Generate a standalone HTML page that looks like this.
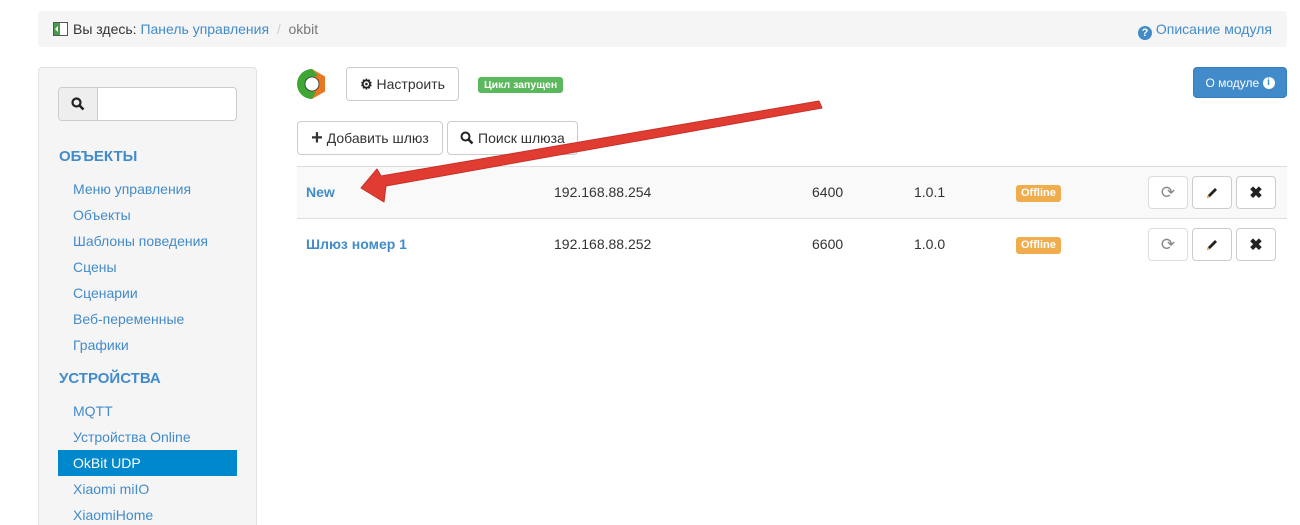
<!DOCTYPE html>
<html style="overflow:hidden;height:525px"><head><meta charset="utf-8"><style>
*{box-sizing:border-box;margin:0;padding:0}
body{width:1300px;height:525px;background:#fff;font-family:"Liberation Sans",sans-serif;font-size:14px;color:#333;position:relative;overflow:hidden}
.a{position:absolute}
.lnk{color:#428bca}
.btn{position:absolute;border:1px solid #ccc;border-radius:4px;background:#fff;display:flex;align-items:center;justify-content:center;font-size:14px;color:#333}
.side a{position:absolute;left:73px;color:#428bca;font-size:14px;text-decoration:none}
.hd{position:absolute;left:59px;color:#428bca;font-weight:bold;font-size:15px}
.lab{position:absolute;background:#f0ad4e;color:#fff;font-weight:bold;font-size:11px;border-radius:3px;padding:2px 5px;line-height:13px}
</style></head><body>
<div class="a" style="left:38px;top:11px;width:1249px;height:36px;background:#f5f5f5;border-radius:4px"></div>
<svg class="a" style="left:53px;top:22px" width="15" height="14"><rect x="0.5" y="0.5" width="14" height="13" fill="#fff" stroke="#555"/><rect x="1" y="1" width="6" height="12" fill="#4a9a4a"/><path d="M2 7l3-3v6z" fill="#fff"/></svg>
<div class="a" style="left:73px;top:21px;font-size:14px">Вы здесь: <span class="lnk">Панель управления</span> <span style="color:#ccc">&nbsp;/&nbsp;</span> <span style="color:#777">okbit</span></div>
<div class="a lnk" style="left:1138px;top:21px;font-size:14px"><span style="display:inline-block;width:14px;height:14px;border-radius:7px;background:#428bca;color:#fff;font-size:11px;font-weight:bold;text-align:center;line-height:14px;vertical-align:-2px">?</span> Описание модуля</div>

<div class="a side" style="left:38px;top:67px;width:219px;height:458px;background:#f5f5f5;border:1px solid #e3e3e3;border-bottom:none;border-radius:4px 4px 0 0"></div>
<div class="a" style="left:58px;top:87px;width:179px;height:34px;border:1px solid #ccc;border-radius:4px;background:#fff;overflow:hidden">
<div style="width:39px;height:32px;background:#eee;border-right:1px solid #ccc;display:flex;align-items:center;justify-content:center"><svg width="14" height="14"><circle cx="5.5" cy="5.5" r="4" fill="none" stroke="#222" stroke-width="2.2"/><path d="M8.5 8.5l4 4" stroke="#222" stroke-width="2.6"/></svg></div></div>
<div class="hd" style="top:148px">ОБЪЕКТЫ</div>
<div class="side">
<a style="top:181px">Меню управления</a>
<a style="top:207px">Объекты</a>
<a style="top:233px">Шаблоны поведения</a>
<a style="top:259px">Сцены</a>
<a style="top:285px">Сценарии</a>
<a style="top:311px">Веб-переменные</a>
<a style="top:337px">Графики</a>
</div>
<div class="hd" style="top:370px">УСТРОЙСТВА</div>
<div class="a" style="left:58px;top:450px;width:179px;height:26px;background:#0088cc"></div>
<div class="side">
<a style="top:403px">MQTT</a>
<a style="top:429px">Устройства Online</a>
<a style="top:455px;color:#fff">OkBit UDP</a>
<a style="top:481px">Xiaomi miIO</a>
<a style="top:507px">XiaomiHome</a>
</div>

<svg class="a" style="left:296px;top:68px" width="32" height="32" viewBox="0 0 32 32"><polygon points="16,1 29,8.5 29,23.5 16,31 3,23.5 3,8.5" fill="#e87722"/><path d="M16 1 A15 15 0 0 0 16 31 L20 24 L16 23 A7 7 0 0 1 16 9 L22 8Z" fill="#3fa535"/><circle cx="16" cy="16" r="7" fill="#fff"/><circle cx="16" cy="16" r="7" fill="none" stroke="#333" stroke-width="0.8"/></svg>
<div class="btn" style="left:346px;top:67px;width:113px;height:34px"><b style="color:#222">⚙</b>&nbsp;Настроить</div>
<div class="a" style="left:478px;top:77px;background:#5cb85c;color:#fff;font-weight:bold;font-size:10.5px;border-radius:3px;padding:2px 6px;line-height:12px">Цикл запущен</div>
<div class="a" style="left:1193px;top:67px;width:94px;height:31px;background:#428bca;border:1px solid #357ebd;border-radius:4px;color:#fff;font-size:12px;display:flex;align-items:center;justify-content:center">О модуле&nbsp;<span style="display:inline-block;width:12px;height:12px;border-radius:6px;background:#fff;color:#428bca;font-size:10px;font-weight:bold;text-align:center;line-height:12px">i</span></div>
<div class="btn" style="left:297px;top:121px;width:146px;height:34px"><b style="font-size:20px;line-height:14px">+</b>&nbsp;Добавить шлюз</div>
<div class="btn" style="left:447px;top:121px;width:131px;height:34px"><svg width="14" height="14"><circle cx="5.5" cy="5.5" r="4" fill="none" stroke="#222" stroke-width="2"/><path d="M8.5 8.5l4 4" stroke="#222" stroke-width="2.4"/></svg>&nbsp;Поиск шлюза</div>

<div class="a" style="left:297px;top:166px;width:990px;height:52px;background:#f9f9f9;border-top:1px solid #ddd"></div>
<div class="a" style="left:297px;top:218px;width:990px;height:52px;border-top:1px solid #ddd"></div>
<div class="a lnk" style="left:306px;top:184px;font-weight:bold">New</div>
<div class="a" style="left:554px;top:184px">192.168.88.254</div>
<div class="a" style="left:812px;top:184px">6400</div>
<div class="a" style="left:914px;top:184px">1.0.1</div>
<div class="lab" style="left:1016px;top:185px">Offline</div>
<div class="a lnk" style="left:306px;top:236px;font-weight:bold">Шлюз номер 1</div>
<div class="a" style="left:554px;top:236px">192.168.88.252</div>
<div class="a" style="left:812px;top:236px">6600</div>
<div class="a" style="left:914px;top:236px">1.0.0</div>
<div class="lab" style="left:1016px;top:237px">Offline</div>

<div class="btn" style="left:1148px;top:176px;width:40px;height:33px;border-color:#ddd;color:#888;font-size:17px">⟳</div>
<div class="btn" style="left:1192px;top:176px;width:40px;height:33px"><svg width="14" height="14"><path d="M2 12l1-3 7-7 2 2-7 7z" fill="#222"/><path d="M2 12l1-3 2 2z" fill="#e8a040"/></svg></div>
<div class="btn" style="left:1236px;top:176px;width:40px;height:33px;font-weight:bold;font-size:16px;color:#222">✖</div>
<div class="btn" style="left:1148px;top:228px;width:40px;height:33px;border-color:#ddd;color:#888;font-size:17px">⟳</div>
<div class="btn" style="left:1192px;top:228px;width:40px;height:33px"><svg width="14" height="14"><path d="M2 12l1-3 7-7 2 2-7 7z" fill="#222"/><path d="M2 12l1-3 2 2z" fill="#e8a040"/></svg></div>
<div class="btn" style="left:1236px;top:228px;width:40px;height:33px;font-weight:bold;font-size:16px;color:#222">✖</div>

<svg class="a" style="left:0;top:0" width="1300" height="525"><polygon points="361,188 377,169 381,176 819,101 822,108 386,186 384,202" fill="#e03c31" stroke="#c8302a" stroke-width="1" stroke-linejoin="round"/></svg>
</body></html>
